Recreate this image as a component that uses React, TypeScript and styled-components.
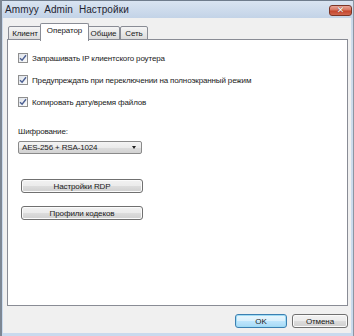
import styled, { createGlobalStyle } from "styled-components";

const GlobalStyle = createGlobalStyle`
  html, body {
    margin: 0;
    padding: 0;
    background: #ffffff;
  }
  body {
    font-family: "Liberation Sans", Arial, sans-serif;
  }
`;

const Window = styled.div`
  width: 354px;
  height: 336px;
  box-sizing: border-box;
  display: flex;
  flex-direction: column;
  background: linear-gradient(to bottom, #c6d6ea 0px, #cfdcec 40px, #c9daee 100%);
  border-left: 2px solid #7d8794;
  border-right: 1px solid #8b96a3;
  overflow: hidden;
`;

const TitleBar = styled.div`
  height: 18px;
  display: flex;
  align-items: center;
  justify-content: space-between;
  padding: 0 1px 0 3px;
  background: linear-gradient(to bottom, #d9e4f1 0%, #c3d3e7 100%);
  border-top: 1px solid #6f7c8c;
  box-sizing: border-box;
`;

const Title = styled.span`
  font-size: 10px;
  color: #1e2430;
  letter-spacing: 0.1px;
  word-spacing: 3px;
`;

const CloseButton = styled.div`
  width: 23px;
  height: 11px;
  margin-top: 2px;
  box-sizing: border-box;
  border: 1px solid #7b3526;
  border-radius: 3px;
  background: linear-gradient(to bottom, #e9a597 0%, #d77560 45%, #c4452c 55%, #d06650 100%);
  display: flex;
  align-items: center;
  justify-content: center;
  color: #ffffff;
  font-size: 9px;
  font-weight: bold;
  font-family: "DejaVu Sans", sans-serif;
  line-height: 1;
  text-shadow: 0 0 1px #5a1d10;
`;

const Body = styled.div`
  flex: 1;
  display: flex;
  flex-direction: column;
  background: #f0f0f0;
  margin: 0 2px 3px 1px;
  padding: 5px 3px 5px 4px;
`;

const TabRow = styled.div`
  display: flex;
  align-items: flex-end;
  height: 17px;
  padding-left: 1px;
  position: relative;
  z-index: 1;
`;

const Tab = styled.div<{ $active?: boolean; $w: number }>`
  box-sizing: border-box;
  height: ${(p) => (p.$active ? "18px" : "14px")};
  width: ${(p) => p.$w}px;
  margin: ${(p) => (p.$active ? "0 -2px -1px -2px" : "0")};
  border: 1px solid #898c95;
  border-bottom: ${(p) => (p.$active ? "none" : "1px solid #898c95")};
  border-radius: 2px 2px 0 0;
  background: ${(p) =>
    p.$active ? "#ffffff" : "linear-gradient(to bottom, #f4f4f4 0%, #e9e9e9 50%, #dcdcdc 100%)"};
  display: flex;
  align-items: ${(p) => (p.$active ? "flex-start" : "center")};
  padding-top: ${(p) => (p.$active ? "2px" : "0")};
  justify-content: center;
  font-size: 8px;
  letter-spacing: -0.1px;
  color: #1a1a1a;
  position: relative;
  z-index: ${(p) => (p.$active ? 2 : 1)};
`;

const Panel = styled.div`
  flex: 1;
  background: #ffffff;
  border: 1px solid #898c95;
  display: flex;
  flex-direction: column;
  padding: 12px 10px 0 10px;
  margin-top: -1px;
`;

const CheckRow = styled.div`
  display: flex;
  align-items: center;
  height: 12px;
  margin-bottom: 10px;
  gap: 4px;
`;

const Box = styled.div`
  width: 10px;
  height: 10px;
  box-sizing: border-box;
  border: 1px solid #8f8f8f;
  background: linear-gradient(135deg, #dfe3ea 0%, #fbfbfb 100%);
  display: flex;
  align-items: center;
  justify-content: center;
`;

const Text = styled.span`
  font-size: 8px;
  letter-spacing: -0.15px;
  color: #1a1a1a;
  white-space: nowrap;
`;

const FieldLabel = styled(Text)`
  display: block;
  margin-top: 8px;
  height: 12px;
  line-height: 12px;
`;

const Combo = styled.div`
  margin-top: 3px;
  width: 124px;
  height: 13px;
  box-sizing: border-box;
  border: 1px solid #8a8a8a;
  border-radius: 2px;
  background: linear-gradient(to bottom, #f4f4f4 0%, #ebebeb 50%, #dddddd 51%, #d2d2d2 100%);
  display: flex;
  align-items: center;
  justify-content: space-between;
  padding: 0 5px 0 3px;
`;

const Arrow = styled.div`
  width: 0;
  height: 0;
  border-left: 2.5px solid transparent;
  border-right: 2.5px solid transparent;
  border-top: 3px solid #1e1e1e;
`;

const Button = styled.div<{ $default?: boolean; $w: number; $mt?: number }>`
  width: ${(p) => p.$w}px;
  height: 14px;
  box-sizing: border-box;
  margin-top: ${(p) => p.$mt ?? 0}px;
  border: 1px solid ${(p) => (p.$default ? "#3c7fb1" : "#707070")};
  border-radius: 3px;
  background: ${(p) =>
    p.$default
      ? "linear-gradient(to bottom, #eaf6fd 0%, #d9f0fc 50%, #bee6fd 51%, #a7d9f5 100%)"
      : "linear-gradient(to bottom, #f2f2f2 0%, #ebebeb 50%, #dddddd 51%, #cfcfcf 100%)"};
  box-shadow: inset 0 0 0 1px ${(p) => (p.$default ? "#9fdcf5" : "#fbfbfb")};
  display: flex;
  align-items: center;
  justify-content: center;
  font-size: 8px;
  letter-spacing: -0.1px;
  color: #1a1a1a;
`;

const PanelButton = styled(Button)`
  margin-left: 3px;
`;

const Footer = styled.div`
  display: flex;
  justify-content: flex-end;
  gap: 5px;
  margin-top: 8px;
`;

const Check = () => (
  <Box>
    <svg width="8" height="8" viewBox="0 0 8 8">
      <path d="M1 4.2 L3.1 6.3 L7 1.3" fill="none" stroke="#4b5f92" strokeWidth="1.4" />
    </svg>
  </Box>
);

const options = [
  "Запрашивать IP клиентского роутера",
  "Предупреждать при переключении на полноэкранный режим",
  "Копировать дату/время файлов",
];

const tabs = [
  { label: "Клиент", w: 34 },
  { label: "Оператор", w: 49, active: true },
  { label: "Общие", w: 33 },
  { label: "Сеть", w: 28 },
];

export default function App() {
  return (
    <>
      <GlobalStyle />
      <Window>
        <TitleBar>
          <Title>Ammyy Admin Настройки</Title>
          <CloseButton>✕</CloseButton>
        </TitleBar>
        <Body>
          <TabRow>
            {tabs.map((t) => (
              <Tab key={t.label} $active={t.active} $w={t.w}>
                {t.label}
              </Tab>
            ))}
          </TabRow>
          <Panel>
            {options.map((o) => (
              <CheckRow key={o}>
                <Check />
                <Text>{o}</Text>
              </CheckRow>
            ))}
            <FieldLabel>Шифрование:</FieldLabel>
            <Combo>
              <Text>AES-256 + RSA-1024</Text>
              <Arrow />
            </Combo>
            <PanelButton $w={122} $mt={25}>
              Настройки RDP
            </PanelButton>
            <PanelButton $w={122} $mt={13}>
              Профили кодеков
            </PanelButton>
          </Panel>
          <Footer>
            <Button $default $w={52}>
              OK
            </Button>
            <Button $w={56}>Отмена</Button>
          </Footer>
        </Body>
      </Window>
    </>
  );
}
